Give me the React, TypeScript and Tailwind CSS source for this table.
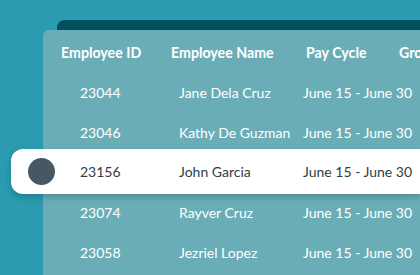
const rows = [
  { id: '23044', name: 'Jane Dela Cruz', cycle: 'June 15 - June 30' },
  { id: '23046', name: 'Kathy De Guzman', cycle: 'June 15 - June 30' },
  { id: '23156', name: 'John Garcia', cycle: 'June 15 - June 30', active: true },
  { id: '23074', name: 'Rayver Cruz', cycle: 'June 15 - June 30' },
  { id: '23058', name: 'Jezriel Lopez', cycle: 'June 15 - June 30' },
];

export default function App() {
  return (
    <div
      className="h-[275px] w-[420px] overflow-hidden bg-[#2a9bb0] pt-[20px]"
      style={{ fontFamily: 'Lato, "Noto Sans", sans-serif' }}
    >
      {/* back card */}
      <div className="ml-[57px] h-[20px] rounded-tl-[8px] bg-[#00505e]" />

      {/* table card */}
      <div className="-mt-[10px] ml-[43px] h-[300px] rounded-tl-[6px] bg-[#6badb7]">
        <div className="flex h-[42px] items-center whitespace-nowrap pt-[4px] text-[14.2px] font-bold text-white">
          <div className="w-[128px] shrink-0 pl-[18px]">Employee ID</div>
          <div className="w-[135px] shrink-0">Employee Name</div>
          <div className="w-[93px] shrink-0">Pay Cycle</div>
          <div className="shrink-0">Gross Pay</div>
        </div>

        {rows.map((r) =>
          r.active ? (
            <div
              key={r.id}
              className="relative -mb-[2px] -ml-[32px] -mt-[3px] flex h-[45px] items-center whitespace-nowrap rounded-l-[12px] bg-white text-[14px] text-[#2f3d48] shadow-[0_3px_6px_rgba(0,40,50,0.25)]"
            >
              <div className="ml-[17px] h-[27px] w-[27px] shrink-0 rounded-full bg-[#475864]" />
              <div className="w-[124px] shrink-0 pl-[25px]">{r.id}</div>
              <div className="w-[124px] shrink-0">{r.name}</div>
              <div className="shrink-0">{r.cycle}</div>
            </div>
          ) : (
            <div
              key={r.id}
              className="flex h-[40px] items-center whitespace-nowrap text-[14px] text-white"
            >
              <div className="w-[136px] shrink-0 pl-[37px]">{r.id}</div>
              <div className="w-[124px] shrink-0">{r.name}</div>
              <div className="shrink-0">{r.cycle}</div>
            </div>
          )
        )}
      </div>
    </div>
  );
}
